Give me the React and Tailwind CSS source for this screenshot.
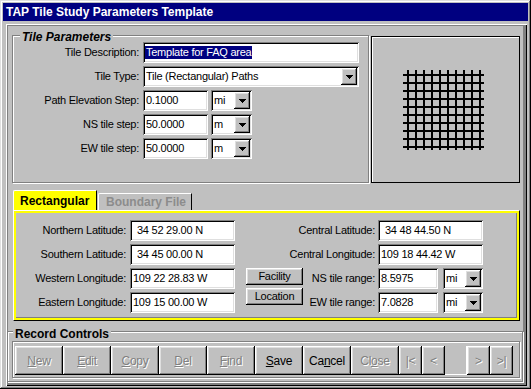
import React from "react";

const raised = "shadow-[inset_-1px_-1px_#000,inset_1px_1px_#fff,inset_-2px_-2px_#808080,inset_2px_2px_#dfdfdf]";
const sunken = "shadow-[inset_1px_1px_#808080,inset_-1px_-1px_#fff,inset_2px_2px_#000,inset_-2px_-2px_#dfdfdf]";
const etched = "border border-[#808080] shadow-[inset_1px_1px_#fff,1px_1px_#fff]";
const off = "text-[#808080] [text-shadow:1px_1px_0_#fff]";

function Arrow() {
  return (
    <div className={`w-[16px] h-[17px] bg-[#c0c0c0] flex items-center justify-center shrink-0 ${raised}`}>
      <svg width="7" height="4" viewBox="0 0 7 4" shapeRendering="crispEdges">
        <path d="M0 0H7V1H6V2H5V3H4V4H3V3H2V2H1V1H0Z" fill="#000" />
      </svg>
    </div>
  );
}

function Box({ className = "", children }) {
  return (
    <div className={`h-[21px] bg-white flex items-center whitespace-nowrap pl-[3px] ${sunken} ${className}`}>
      {children}
    </div>
  );
}

function Combo({ className = "", value }) {
  return (
    <div className={`h-[21px] bg-white flex items-center justify-between pl-[3px] pr-[2px] ${sunken} ${className}`}>
      <span>{value}</span>
      <Arrow />
    </div>
  );
}

function Btn({ children, disabled, className = "" }) {
  return (
    <div className={`bg-[#c0c0c0] flex items-center justify-center whitespace-nowrap ${raised} ${disabled ? off : ""} ${className}`}>
      {children}
    </div>
  );
}

// 10 x 10 tile grid drawn in the preview box
function Grid() {
  const lines = [4, 12, 20, 28, 36, 44, 52, 60, 68, 76];
  return (
    <svg width="81" height="80" viewBox="0 0 81 80" shapeRendering="crispEdges">
      {lines.map((p) => (
        <g key={p} stroke="#000" strokeWidth="2">
          <line x1={p + 1} y1="0" x2={p + 1} y2="80" />
          <line x1="0" y1={p + 1} x2="81" y2={p + 1} />
        </g>
      ))}
    </svg>
  );
}

const records = [
  { l: <><span className="underline">N</span>ew</>, off: true },
  { l: <><span className="underline">E</span>dit</>, off: true },
  { l: <><span className="underline">C</span>opy</>, off: true },
  { l: <><span className="underline">D</span>el</>, off: true },
  { l: <><span className="underline">F</span>ind</>, off: true },
  { l: <><span className="underline">S</span>ave</>, off: false },
  { l: <>Ca<span className="underline">n</span>cel</>, off: false },
  { l: <>Cl<span className="underline">o</span>se</>, off: true },
];

export default function App() {
  return (
    <div className="w-[531px] h-[389px] bg-[#c0c0c0] p-[3px] shadow-[inset_-1px_-1px_#000,inset_1px_1px_#dfdfdf,inset_-2px_-2px_#808080,inset_2px_2px_#fff] font-['Liberation_Sans',Arial,sans-serif] text-[11px] tracking-[-0.25px] text-black leading-none">
      <div className="h-[18px] bg-[#000080] text-white font-bold text-[12px] tracking-normal flex items-center pl-[3px]">
        TAP Tile Study Parameters Template
      </div>

      <div className="mt-[3px] ml-[3px] mr-[1px] h-[362px] pt-[11px] shadow-[inset_1px_1px_#fff,inset_-1px_-1px_#000,inset_2px_2px_#808080,inset_-4px_-4px_#808080] flex flex-col">
        {/* top row */}
        <div className="flex ml-[6px]">
          <div className={`relative w-[357px] h-[148px] pt-[6px] flex flex-col gap-[3px] ${etched}`}>
            <span className="absolute left-[7px] -top-[5px] px-[2px] bg-[#c0c0c0] font-bold italic text-[12px] tracking-normal">
              Tile Parameters
            </span>
            <div className="flex items-center h-[21px]">
              <span className="w-[126px] text-right">Tile Description:</span>
              <Box className="ml-[4px] w-[216px]">
                <span className="bg-[#000080] text-white h-[13px] flex items-center px-[1px] -ml-[1px]">Template for FAQ area</span>
              </Box>
            </div>
            <div className="flex items-center h-[21px]">
              <span className="w-[126px] text-right">Tile Type:</span>
              <Combo className="ml-[4px] w-[216px]" value="Tile (Rectangular) Paths" />
            </div>
            <div className="flex items-center h-[21px]">
              <span className="w-[126px] text-right">Path Elevation Step:</span>
              <Box className="ml-[4px] w-[65px]">0.1000</Box>
              <Combo className="ml-[3px] w-[41px]" value="mi" />
            </div>
            <div className="flex items-center h-[21px]">
              <span className="w-[126px] text-right">NS tile step:</span>
              <Box className="ml-[4px] w-[65px]">50.0000</Box>
              <Combo className="ml-[3px] w-[41px]" value="m" />
            </div>
            <div className="flex items-center h-[21px]">
              <span className="w-[126px] text-right">EW tile step:</span>
              <Box className="ml-[4px] w-[65px]">50.0000</Box>
              <Combo className="ml-[3px] w-[41px]" value="m" />
            </div>
          </div>
          <div className="ml-[2px] mt-[1px] w-[149px] h-[147px] border border-black shadow-[inset_1px_1px_#fff] pl-[31px] pt-[33px]">
            <Grid />
          </div>
        </div>

        {/* tabs */}
        <div className="flex items-end h-[20px] ml-[7px] mt-[7px]">
          <div className="w-[84px] h-[20px] bg-[#ffff00] border-t border-l border-white border-r border-r-black rounded-tl-[2px] flex items-center pl-[6px] font-bold text-[12px] tracking-normal">
            Rectangular
          </div>
          <div className="ml-[1px] w-[94px] h-[17px] border-t border-l border-white border-r border-r-black rounded-tl-[2px] flex items-center pl-[7px] font-bold text-[12px] tracking-normal text-[#8c8c8c]">
            Boundary File
          </div>
        </div>

        <div className="ml-[7px] w-[507px] h-[111px] border border-white border-r-black border-b-black">
          <div className="h-full border-2 border-[#ffff00] shadow-[inset_-1px_-1px_#808080] pt-[7px]">
            <div className="grid grid-cols-[114px_116px_57px_75px_105px] gap-y-[3px] items-center">
              <span className="text-right pr-[4px]">Northern Latitude:</span>
              <Box className="w-[105px] pl-[7px]">34 52 29.00 N</Box>
              <span className="col-span-2 text-right pr-[3px]">Central Latitude:</span>
              <Box className="pl-[7px]">34 48 44.50 N</Box>

              <span className="text-right pr-[4px]">Southern Latitude:</span>
              <Box className="w-[105px] pl-[7px]">34 45 00.00 N</Box>
              <span className="col-span-2 text-right pr-[3px]">Central Longitude:</span>
              <Box>109 18 44.42 W</Box>

              <span className="text-right pr-[4px]">Western Longitude:</span>
              <Box className="w-[105px]">109 22 28.83 W</Box>
              <Btn className="self-start h-[17px] w-[57px]">Facility</Btn>
              <span className="text-right pr-[3px]">NS tile range:</span>
              <div className="flex">
                <Box className="w-[60px]">8.5975</Box>
                <Combo className="ml-[5px] w-[40px]" value="mi" />
              </div>

              <span className="text-right pr-[4px]">Eastern Longitude:</span>
              <Box className="w-[105px]">109 15 00.00 W</Box>
              <Btn className="self-start -mt-[4px] h-[17px] w-[57px]">Location</Btn>
              <span className="text-right pr-[3px]">EW tile range:</span>
              <div className="flex">
                <Box className="w-[60px]">7.0828</Box>
                <Combo className="ml-[5px] w-[40px]" value="mi" />
              </div>
            </div>
          </div>
        </div>

        {/* record controls */}
        <div className={`relative ml-[1px] mt-[10px] w-[516px] h-[51px] pt-[9px] pl-[4px] ${etched}`}>
          <span className="absolute left-[5px] -top-[4px] px-[2px] bg-[#c0c0c0] font-bold text-[12px] tracking-normal">
            Record Controls
          </span>
          <div className={`w-[508px] h-[37px] pt-[4px] pl-[2px] flex ${etched}`}>
            {records.map((r, i) => (
              <Btn key={i} disabled={r.off} className="w-[48px] h-[29px] text-[12px]">
                {r.l}
              </Btn>
            ))}
            <Btn disabled className="w-[23px] h-[29px] text-[12px]">|&lt;</Btn>
            <Btn disabled className="w-[23px] h-[29px] text-[12px]">&lt;</Btn>
            <div className="w-[22px] h-[29px] border-b border-r border-white" />
            <Btn disabled className="w-[23px] h-[29px] text-[12px]">&gt;</Btn>
            <Btn disabled className="w-[23px] h-[29px] text-[12px]">&gt;|</Btn>
          </div>
        </div>
      </div>
    </div>
  );
}
